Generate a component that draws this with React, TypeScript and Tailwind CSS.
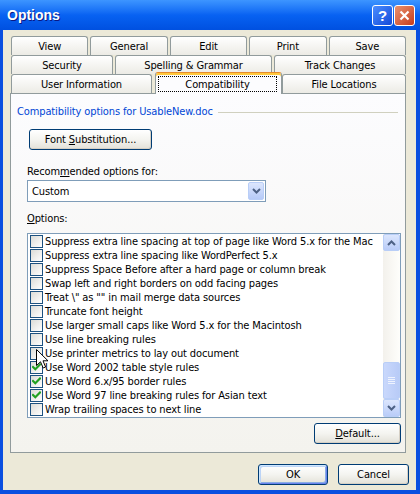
import React from "react";

const items: { label: string; checked: boolean }[] = [
  { label: "Suppress extra line spacing at top of page like Word 5.x for the Mac", checked: false },
  { label: "Suppress extra line spacing like WordPerfect 5.x", checked: false },
  { label: "Suppress Space Before after a hard page or column break", checked: false },
  { label: "Swap left and right borders on odd facing pages", checked: false },
  { label: 'Treat \\" as "" in mail merge data sources', checked: false },
  { label: "Truncate font height", checked: false },
  { label: "Use larger small caps like Word 5.x for the Macintosh", checked: false },
  { label: "Use line breaking rules", checked: false },
  { label: "Use printer metrics to lay out document", checked: false },
  { label: "Use Word 2002 table style rules", checked: true },
  { label: "Use Word 6.x/95 border rules", checked: true },
  { label: "Use Word 97 line breaking rules for Asian text", checked: true },
  { label: "Wrap trailing spaces to next line", checked: false },
];

function Tab({ label, className }: { label: string; className: string }) {
  return (
    <div
      className={
        "h-[19px] border border-b-0 border-[#919B9C] rounded-t-[3px] bg-linear-to-b from-white to-[#ECEBE5] flex items-center justify-center text-[11px] leading-none text-black " +
        className
      }
    >
      {label}
    </div>
  );
}

function XPButton({
  children,
  className,
  isDefault,
}: {
  children: React.ReactNode;
  className: string;
  isDefault?: boolean;
}) {
  return (
    <div
      className={
        "h-[21px] border border-[#003C74] rounded-[3px] bg-linear-to-b from-white via-[#F4F4F0] to-[#E3E1D8] flex items-center justify-center text-[11px] leading-none text-black " +
        (isDefault
          ? "shadow-[inset_1px_1px_0_#CEE7FF,inset_-1px_-1px_0_#6982EE,inset_2px_2px_0_#BCD4F6,inset_-2px_-2px_0_#89ADE4] "
          : "shadow-[inset_-1px_-1px_0_#D6D0C5] ") +
        className
      }
    >
      {children}
    </div>
  );
}

function Checkbox({ checked }: { checked: boolean }) {
  return (
    <div className="w-[13px] h-[13px] shrink-0 border border-[#1C5180] bg-linear-to-br from-[#DCDCD7] to-white flex items-center justify-center">
      {checked && (
        <svg width="9" height="9" viewBox="0 0 9 9">
          <path d="M1 4 L3.3 6.3 L8 1.5" stroke="#21A121" strokeWidth="2.2" fill="none" strokeLinecap="square" />
        </svg>
      )}
    </div>
  );
}

function Chevron({ up }: { up?: boolean }) {
  return (
    <svg width="9" height="6" viewBox="0 0 9 6">
      <path
        d={up ? "M1 5 L4.5 1.5 L8 5" : "M1 1 L4.5 4.5 L8 1"}
        stroke="#4D6185"
        strokeWidth="2"
        fill="none"
      />
    </svg>
  );
}

export default function App() {
  return (
    <div className="relative w-[420px] h-[494px] bg-[#0A4FE0] flex flex-col overflow-hidden font-['DejaVu_Sans_Condensed','Liberation_Sans',sans-serif] tracking-[-0.12px] text-black select-none">
      {/* Title bar */}
      <div className="h-[30px] shrink-0 flex items-center pl-[7px] pr-[5px] bg-linear-to-b from-[#3D95FF] via-[#0862F2] to-[#0050E0]">
        <div className="flex-1 text-white font-bold text-[14px] leading-none tracking-normal font-['Liberation_Sans',sans-serif] [text-shadow:1px_1px_0_#0A1883]">
          Options
        </div>
        <div className="flex gap-[1px]">
          <div className="w-[21px] h-[21px] rounded-[3px] border border-white bg-linear-to-br from-[#4C8DFF] to-[#1448D8] flex items-center justify-center text-white font-bold text-[15px] leading-none font-['Liberation_Sans',sans-serif]">
            ?
          </div>
          <div className="w-[21px] h-[21px] rounded-[3px] border border-white bg-linear-to-br from-[#E9906C] to-[#C4391A] flex items-center justify-center">
            <svg width="11" height="11" viewBox="0 0 11 11">
              <path d="M1.5 1.5 L9.5 9.5 M9.5 1.5 L1.5 9.5" stroke="white" strokeWidth="2.2" />
            </svg>
          </div>
        </div>
      </div>

      {/* Body */}
      <div className="flex-1 ml-[3px] mr-[4px] mb-[4px] bg-[#ECE9D8] flex flex-col pt-[6px]">
        {/* Tabs */}
        <div className="ml-[8px] w-[395px] flex flex-col">
          <div className="flex gap-[2px]">
            <Tab label="View" className="flex-1" />
            <Tab label="General" className="flex-1" />
            <Tab label="Edit" className="flex-1" />
            <Tab label="Print" className="flex-1" />
            <Tab label="Save" className="flex-1" />
          </div>
          <div className="flex gap-[2px]">
            <Tab label="Security" className="w-[102px]" />
            <Tab label="Spelling & Grammar" className="w-[157px]" />
            <Tab label="Track Changes" className="w-[132px]" />
          </div>
          <div className="flex h-[19px]">
            <Tab label="User Information" className="w-[141px]" />
            <div className="relative z-10 ml-[3px] -mt-[2px] w-[127px] h-[22px] border border-b-0 border-[#919B9C] border-t-[#E68B2C] rounded-t-[3px] bg-[#FCFCFE] shadow-[inset_0_2px_0_#FFC83C] flex pt-[3px] pl-[2px] pr-[4px] pb-[2px]">
              <div className="flex-1 border border-dotted border-black flex items-center justify-center text-[11px] leading-none">
                Compatibility
              </div>
            </div>
            <Tab label="File Locations" className="w-[124px]" />
          </div>
        </div>

        {/* Panel */}
        <div className="ml-[7px] w-[396px] h-[360px] border border-[#919B9C] bg-linear-to-b from-[#FCFCFE] to-[#F4F3EE] flex flex-col">
          <div className="mt-[11px] h-[14px] flex items-center pl-[6px] pr-[7px] gap-[5px]">
            <span className="text-[11px] leading-[14px] text-[#0046D5] whitespace-nowrap">
              Compatibility options for UsableNew.doc
            </span>
            <div className="flex-1 h-px bg-[#D0D0BF]" />
          </div>

          <XPButton className="mt-[10px] ml-[18px] w-[123px]">
            Font&nbsp;<span className="underline">S</span>ubstitution...
          </XPButton>

          <div className="mt-[15px] ml-[16px] h-[14px] text-[11px] leading-[14px]">
            Recom<span className="underline">m</span>ended options for:
          </div>
          <div className="mt-[1px] ml-[16px] w-[239px] h-[22px] border border-[#7F9DB9] bg-white flex items-center p-[1px]">
            <div className="flex-1 pl-[3px] text-[11px] leading-none">Custom</div>
            <div className="w-[16px] h-[18px] rounded-[2px] border border-[#B9CEF7] bg-linear-to-b from-[#DCE6FD] to-[#B6CAF8] flex items-center justify-center">
              <Chevron />
            </div>
          </div>

          <div className="mt-[10px] ml-[16px] h-[14px] text-[11px] leading-[14px]">
            <span className="underline">O</span>ptions:
          </div>

          <div className="mt-[7px] ml-[16px] w-[374px] h-[185px] border border-[#7F9DB9] bg-white flex">
            <div className="flex-1 flex flex-col overflow-hidden">
              {items.map((it) => (
                <div key={it.label} className="h-[14px] flex items-center pl-[2px] gap-[2px]">
                  <Checkbox checked={it.checked} />
                  <span className="text-[11px] leading-none whitespace-nowrap">{it.label}</span>
                </div>
              ))}
            </div>
            <div className="w-[17px] flex flex-col bg-linear-to-r from-[#F3F1EC] to-[#FEFEFB]">
              <div className="h-[17px] rounded-[2px] border border-[#B9CEF7] bg-linear-to-b from-[#DCE6FD] to-[#B9CCF8] flex items-center justify-center">
                <Chevron up />
              </div>
              <div className="h-[111px]" />
              <div className="h-[37px] rounded-[2px] border border-[#B9CEF7] bg-linear-to-r from-[#C9D8FC] to-[#B8CBF7] flex flex-col items-center justify-center gap-[1px]">
                <div className="w-[7px] h-px bg-[#EEF3FE]" />
                <div className="w-[7px] h-px bg-[#EEF3FE]" />
                <div className="w-[7px] h-px bg-[#EEF3FE]" />
                <div className="w-[7px] h-px bg-[#EEF3FE]" />
              </div>
              <div className="flex-1 rounded-[2px] border border-[#B9CEF7] bg-linear-to-b from-[#DCE6FD] to-[#B9CCF8] flex items-center justify-center">
                <Chevron />
              </div>
            </div>
          </div>

          <div className="mt-[5px] flex justify-end pr-[4px]">
            <XPButton className="w-[87px]">
              <span className="underline">D</span>efault...
            </XPButton>
          </div>
        </div>

        {/* Bottom buttons */}
        <div className="mt-[11px] flex justify-end gap-[10px] pr-[7px]">
          <XPButton className="w-[70px]" isDefault>
            OK
          </XPButton>
          <XPButton className="w-[71px]">Cancel</XPButton>
        </div>
      </div>

      {/* Mouse cursor */}
      <svg className="absolute left-[36px] top-[349px]" width="13" height="21" viewBox="0 0 13 21">
        <path
          d="M0.5 0.5 L0.5 16.5 L4.5 12.8 L7.2 19 L9.6 18 L7 11.8 L12 11.8 Z"
          fill="white"
          stroke="black"
          strokeWidth="1"
          strokeLinejoin="miter"
        />
      </svg>
    </div>
  );
}
